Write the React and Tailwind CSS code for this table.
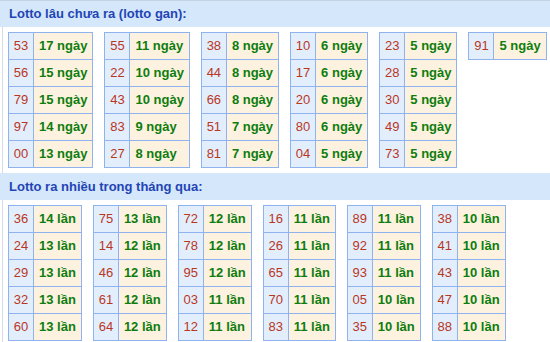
import React from "react";

const gan = [
  [["53", "17"], ["56", "15"], ["79", "15"], ["97", "14"], ["00", "13"]],
  [["55", "11"], ["22", "10"], ["43", "10"], ["83", "9"], ["27", "8"]],
  [["38", "8"], ["44", "8"], ["66", "8"], ["51", "7"], ["81", "7"]],
  [["10", "6"], ["17", "6"], ["20", "6"], ["80", "6"], ["04", "5"]],
  [["23", "5"], ["28", "5"], ["30", "5"], ["49", "5"], ["73", "5"]],
  [["91", "5"]],
];

const nhieu = [
  [["36", "14"], ["24", "13"], ["29", "13"], ["32", "13"], ["60", "13"]],
  [["75", "13"], ["14", "12"], ["46", "12"], ["61", "12"], ["64", "12"]],
  [["72", "12"], ["78", "12"], ["95", "12"], ["03", "11"], ["12", "11"]],
  [["16", "11"], ["26", "11"], ["65", "11"], ["70", "11"], ["83", "11"]],
  [["89", "11"], ["92", "11"], ["93", "11"], ["05", "10"], ["35", "10"]],
  [["38", "10"], ["41", "10"], ["43", "10"], ["47", "10"], ["88", "10"]],
];

function Box({ rows, unit }) {
  return (
    <div className="inline-grid grid-cols-[25px_auto] border-l border-t border-[#8fb3ee]">
      {rows.map(([n, v], i) => (
        <React.Fragment key={i}>
          <div className="h-[27px] w-[25px] flex items-center justify-center border-r border-b border-[#8fb3ee] bg-[#e3eefc] text-[#b8371f]">
            {n}
          </div>
          <div className="h-[27px] flex items-center px-[5px] border-r border-b border-[#8fb3ee] bg-[#fdf2e0] font-bold text-[#0e7d0e] whitespace-nowrap">
            {v} {unit}
          </div>
        </React.Fragment>
      ))}
    </div>
  );
}

function Header({ children, top }) {
  return (
    <div
      className={
        "h-[27px] flex items-center pl-[9px] bg-[#d5e7fa] text-[13px] font-bold text-[#1f45b5] " +
        (top ? "border-t border-[#c4d3e4]" : "")
      }
    >
      {children}
    </div>
  );
}

export default function App() {
  return (
    <div className="w-[550px] h-[342px] overflow-hidden bg-white font-['Liberation_Sans',Arial,sans-serif] text-[13px]">
      <Header top>Lotto lâu chưa ra (lotto gan):</Header>
      <div className="ml-[2px] border-l border-[#d3dbe6] pl-[5px] pt-[5px] pb-[5px] flex items-start gap-[11px]">
        {gan.map((t, i) => (
          <Box key={i} rows={t} unit="ngày" />
        ))}
      </div>
      <Header>Lotto ra nhiều trong tháng qua:</Header>
      <div className="ml-[2px] border-l border-[#d3dbe6] pl-[5px] pt-[5px] pb-[5px] flex items-start gap-[11px]">
        {nhieu.map((t, i) => (
          <Box key={i} rows={t} unit="lần" />
        ))}
      </div>
    </div>
  );
}
